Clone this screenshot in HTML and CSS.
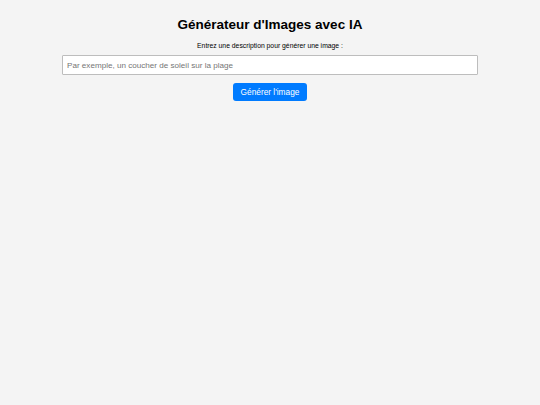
FILE: index.html
```html
<!DOCTYPE html>
<html lang="fr">
<head>
<meta charset="utf-8">
<title>Générateur d'Images avec IA</title>
<link rel="stylesheet" href="styles.css">
</head>
<body>
<main class="container">
  <h1 class="title">Générateur d'Images avec IA</h1>
  <label class="label" for="prompt">Entrez une description pour générer une image :</label>
  <input class="prompt" id="prompt" type="text" placeholder="Par exemple, un coucher de soleil sur la plage">
  <button class="generate" type="button">Générer l'image</button>
</main>
</body>
</html>
```
FILE: styles.css
```css
html, body {
  margin: 0;
  padding: 0;
  background: #f4f4f4;
  height: 100%;
}
body {
  font-family: "Liberation Sans", Arial, sans-serif;
  color: #000;
}
.container {
  display: flex;
  flex-direction: column;
  align-items: center;
  padding: 15px 62px 0;
}
.title {
  margin: 0;
  font-size: 13.5px;
  font-weight: bold;
  line-height: 19px;
}
.label {
  margin-top: 7px;
  font-size: 6.8px;
  line-height: 9px;
}
.prompt {
  box-sizing: border-box;
  margin-top: 5px;
  width: 100%;
  height: 20px;
  padding: 0 4px;
  border: 1px solid #bdbdbd;
  border-radius: 1px;
  background: #fff;
  font-family: "Liberation Sans", Arial, sans-serif;
  font-size: 8.1px;
  outline: none;
}
.prompt::placeholder {
  color: #757575;
}
.generate {
  margin-top: 8px;
  height: 18px;
  padding: 0 8px;
  border: none;
  border-radius: 3px;
  background: #007bff;
  color: #fff;
  font-family: "Liberation Sans", Arial, sans-serif;
  font-size: 8.3px;
  cursor: pointer;
}
```
